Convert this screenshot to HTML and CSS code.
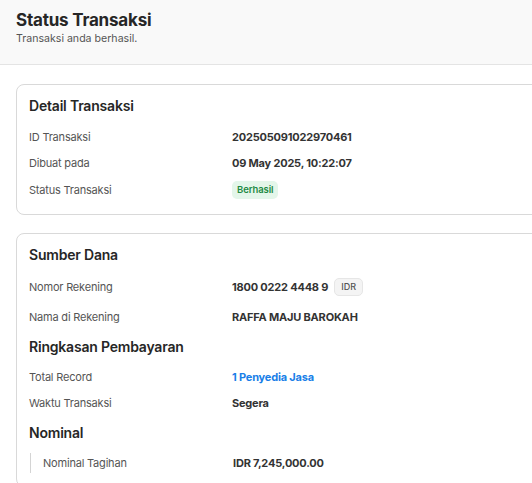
FILE: index.html
```html
<!DOCTYPE html>
<html lang="id">
<head>
   <meta charset="UTF-8">
   <meta name="viewport" content="width=device-width, initial-scale=1.0">
   <link rel="stylesheet" href="styles.css">
</head>
<body>
   <div class="page-header">
      <h1 class="page-title">Status Transaksi</h1>
      <p class="page-subtitle">Transaksi anda berhasil.</p>
   </div>

   <div class="content">
      <div class="card">
         <h2 class="section-title">Detail Transaksi</h2>
         <div class="row">
            <span class="label">ID Transaksi</span>
            <span class="value">202505091022970461</span>
         </div>
         <div class="row">
            <span class="label">Dibuat pada</span>
            <span class="value">09 May 2025, 10:22:07</span>
         </div>
         <div class="row row-tag">
            <span class="label">Status Transaksi</span>
            <span class="value"><span class="status-badge">Berhasil</span></span>
         </div>
      </div>

      <div class="card">
         <h2 class="section-title">Sumber Dana</h2>
         <div class="row row-tag row-gap">
            <span class="label">Nomor Rekening</span>
            <span class="value">1800 0222 4448 9 <span class="currency">IDR</span></span>
         </div>
         <div class="row">
            <span class="label">Nama di Rekening</span>
            <span class="value">RAFFA MAJU BAROKAH</span>
         </div>

         <h2 class="section-title">Ringkasan Pembayaran</h2>
         <div class="row">
            <span class="label">Total Record</span>
            <span class="value link">1 Penyedia Jasa</span>
         </div>
         <div class="row">
            <span class="label">Waktu Transaksi</span>
            <span class="value">Segera</span>
         </div>

         <h2 class="section-title">Nominal</h2>
         <div class="row">
            <span class="label sub-label">Nominal Tagihan</span>
            <span class="value">IDR 7,245,000.00</span>
         </div>
      </div>
   </div>
</body>
</html>
```

FILE: styles.css
```css
html, body {
   overflow: hidden;
}
body {
   font-family: Inter, "Noto Sans", sans-serif;
   background-color: #fff;
   color: #333;
   margin: 0;
   padding: 0;
}
.page-header {
   background-color: #f9f9f9;
   border-bottom: 1px solid #e4e4e4;
   padding: 9px 16px 0;
   height: 55px;
}
.page-title {
   font-size: 17px;
   font-weight: 700;
   color: #262626;
   line-height: 22px;
   margin: 0;
   letter-spacing: -0.2px;
}
.page-subtitle {
   font-size: 10.6px;
   color: #555;
   line-height: 14px;
   margin: 1px 0 0;
}
.content {
   display: flex;
   flex-direction: column;
   gap: 18px;
   padding: 19px 0 0 16px;
   overflow: hidden;
}
.card {
   width: 540px;
   flex-shrink: 0;
   border: 1px solid #d9d9d9;
   border-radius: 8px;
   padding: 11px 12px 10px;
   background-color: #fff;
}
.section-title {
   font-size: 14px;
   font-weight: 600;
   color: #262626;
   line-height: 20px;
   letter-spacing: -0.2px;
   margin: 7px 0 7px;
}
.section-title:first-child {
   margin-top: 0;
   margin-bottom: 8px;
}
.row {
   display: flex;
   align-items: center;
   min-height: 26px;
   font-size: 11px;
   letter-spacing: -0.2px;
}
.row-tag {
   min-height: 28px;
}
.row-gap {
   margin-bottom: 3px;
}
.label {
   width: 203px;
   flex-shrink: 0;
   color: #555;
}
.sub-label {
   border-left: 1px solid #d4d4d4;
   margin-left: 1px;
   padding-left: 12px;
   width: 190px;
   line-height: 20px;
}
.value {
   font-weight: 700;
   color: #333;
   display: flex;
   align-items: center;
   gap: 6px;
}
.link {
   color: #1a7fe8;
}
.status-badge {
   background-color: #e4f6ea;
   color: #1f8a44;
   font-size: 9.5px;
   font-weight: 600;
   border-radius: 5px;
   padding: 0 5px;
   line-height: 18px;
   letter-spacing: -0.1px;
}
.currency {
   background-color: #f4f4f4;
   border: 1px solid #e6e6e6;
   color: #555;
   font-size: 9px;
   font-weight: 500;
   border-radius: 5px;
   padding: 0 6px;
   line-height: 16px;
   letter-spacing: 0;
}
```
